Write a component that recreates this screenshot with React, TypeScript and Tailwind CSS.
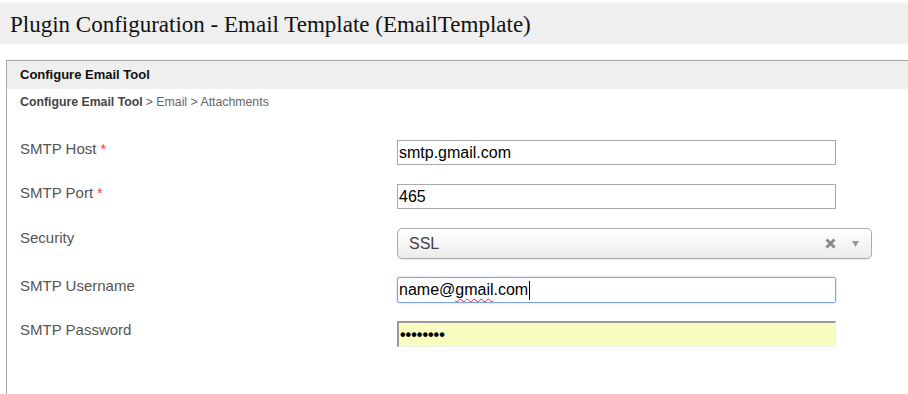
import React from 'react';

// Plugin configuration screen: email tool settings form

const Label = ({ text, required }: { text: string; required?: boolean }) => (
  <div className="w-[390px] pl-[13px] -mt-[2px] text-[15px] text-[#555]">
    {text}
    {required && <span className="ml-[4px] text-[14px] text-[#e8404a]">*</span>}
  </div>
);

export default function App() {
  return (
    <div className="w-[908px] h-[394px] overflow-hidden bg-white font-['Liberation_Sans',Arial,sans-serif]">
      {/* title band */}
      <div className="mt-[2px] h-[42px] bg-[#efefef] border-t-[3px] border-[#f5f5f5] pl-[10px] flex items-center">
        <h1 className="font-['Liberation_Serif','Times_New_Roman',serif] text-[23px] text-[#111] leading-none">
          Plugin Configuration - Email Template (EmailTemplate)
        </h1>
      </div>

      {/* panel */}
      <div className="mt-[16px] ml-[6px] w-[920px] h-[400px] border-l border-t border-[#a8a8a8]">
        <div className="h-[28px] bg-[#efefef] pl-[13px] flex items-center">
          <span className="text-[13px] font-bold text-[#111]">Configure Email Tool</span>
        </div>
        <div className="h-[26px] pl-[13px] flex items-center text-[12.3px] text-[#666]">
          <span className="font-bold text-[#444]">Configure Email Tool</span>
          <span className="ml-[3px]">&gt; Email &gt; Attachments</span>
        </div>

        <div className="mt-[25px] flex flex-col">
          {/* host */}
          <div className="flex h-[44px]">
            <Label text="SMTP Host" required />
            <div className="w-[439px] h-[25px] border border-[#a9a9a9] px-[1px] flex items-center text-[16px] text-black">
              smtp.gmail.com
            </div>
          </div>
          {/* port */}
          <div className="flex h-[44px]">
            <Label text="SMTP Port" required />
            <div className="w-[439px] h-[25px] border border-[#a9a9a9] px-[1px] flex items-center text-[16px] text-black">
              465
            </div>
          </div>
          {/* security */}
          <div className="flex h-[49px]">
            <div className="pt-[1px]">
              <Label text="Security" />
            </div>
            <div className="w-[475px] h-[31px] rounded-[5px] border border-[#aaa] bg-gradient-to-b from-white to-[#ececec] shadow-[0_1px_1px_rgba(0,0,0,0.08)] pl-[11px] pr-[12px] flex items-center text-[16px] text-[#444]">
              <span className="flex-1">SSL</span>
              <svg width="11" height="11" viewBox="0 0 11 11" className="mr-[16px]">
                <path d="M1.5 1.5 L9.5 9.5 M9.5 1.5 L1.5 9.5" stroke="#888" strokeWidth="2.8" />
              </svg>
              <svg width="7" height="6" viewBox="0 0 7 6">
                <path d="M0 0 L7 0 L3.5 6 Z" fill="#999" />
              </svg>
            </div>
          </div>
          {/* username */}
          <div className="flex h-[44px]">
            <Label text="SMTP Username" />
            <div className="w-[439px] h-[26px] rounded-[2px] border border-[#7ea4e8] shadow-[0_0_2px_rgba(90,140,230,0.5)] px-[1px] flex items-center text-[16px] text-black">
              <span>name@</span>
              <span className="underline decoration-wavy decoration-[#e23] decoration-1 underline-offset-[3px]">gmail</span>
              <span>.com</span>
              <span className="ml-[1px] w-[1px] h-[19px] bg-black" />
            </div>
          </div>
          {/* password */}
          <div className="flex h-[44px]">
            <Label text="SMTP Password" />
            <div className="w-[439px] h-[26px] border-t-2 border-l-2 border-r border-b border-t-[#9a9a9a] border-l-[#9a9a9a] border-r-[#eeeeee] border-b-[#eeeeee] bg-[#fafdc0] pl-[1px] flex items-center text-[16px] font-bold text-black">
              ••••••••
            </div>
          </div>
        </div>
      </div>
    </div>
  );
}
